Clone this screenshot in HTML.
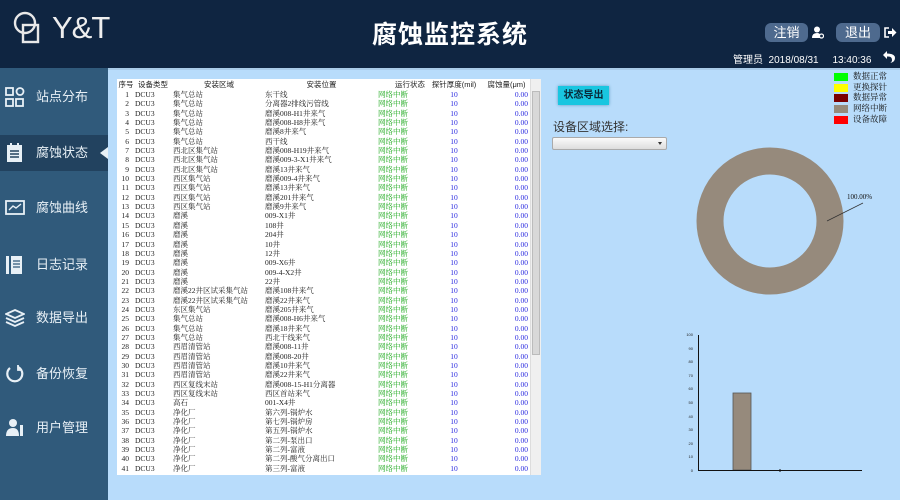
<!DOCTYPE html>
<html><head><meta charset="utf-8">
<style>
*{margin:0;padding:0;box-sizing:border-box}
body{width:900px;height:500px;overflow:hidden;background:#b8dcfb;font-family:"Liberation Sans","Noto Sans CJK SC",sans-serif;position:relative}
#hdr{position:absolute;left:0;top:0;width:900px;height:68px;background:#0f2541;color:#fff}
#side{position:absolute;left:0;top:68px;width:108px;height:432px;background:#305a7b}
.it{position:absolute;left:0;width:108px;height:36px;color:#e8f0f6;font-size:13px;line-height:36px}
.it span{position:absolute;left:36px}
.it svg{position:absolute;left:5px;top:8px}
.act{background:#22425f}
#tbl{position:absolute;left:117px;top:79px;width:424px;height:396px;background:#fff;overflow:hidden}
table{border-collapse:collapse;font-family:"Liberation Serif","Noto Serif CJK SC",serif;font-size:7.5px;position:absolute;left:0;top:0;width:413px}
td,th{height:9.35px;line-height:9.35px;padding:0;white-space:nowrap;font-weight:normal;overflow:hidden}
th{height:11px;line-height:11px;font-family:"Liberation Sans","Noto Sans CJK SC",sans-serif;font-size:7.5px;color:#222}
td{color:#222}
.g{color:#1aa81a}.b{color:#2a2ae0;text-align:center}.r{color:#2a2ae0;text-align:right;padding-right:2px}
.n{text-align:right;padding-right:6px}
</style></head><body>
<div id="hdr">
<svg style="position:absolute;left:13px;top:11px" width="36" height="36" viewBox="0 0 36 36" fill="none" stroke="#e8e8e8" stroke-width="2.4"><circle cx="12" cy="12" r="10"/><rect x="10" y="14" width="15" height="17"/></svg>
<div style="position:absolute;left:52px;top:10px;font-size:31px;color:#eee;letter-spacing:-1px">Y&amp;T</div>
<div style="position:absolute;left:0;width:900px;top:15px;text-align:center;font-size:25px;font-weight:bold;letter-spacing:1px">腐蚀监控系统</div>
<div style="position:absolute;left:765px;top:23px;width:43px;height:19px;border-radius:6px;background:#4e6a8e;font-size:13px;line-height:19px;text-align:center">注销</div>
<svg style="position:absolute;left:812px;top:26px" width="12" height="13"><circle cx="5" cy="3.5" r="3" fill="#fff"/><path d="M0 12 Q0 7 5 7 Q8 7 8 9 L8 12Z" fill="#fff"/><circle cx="9.5" cy="10" r="2" fill="none" stroke="#fff" stroke-width="1.2"/></svg>
<div style="position:absolute;left:836px;top:23px;width:44px;height:19px;border-radius:6px;background:#4e6a8e;font-size:13px;line-height:19px;text-align:center">退出</div>
<svg style="position:absolute;left:884px;top:27px" width="13" height="11"><path d="M5 1H1V10H5" stroke="#fff" stroke-width="1.6" fill="none"/><path d="M4 4H8V1L12.5 5.5L8 10V7H4Z" fill="#fff"/></svg>
<div style="position:absolute;left:733px;top:51px;font-size:10px">管理员&nbsp; 2018/08/31 &nbsp;&nbsp;&nbsp; 13:40:36</div>
<svg style="position:absolute;left:882px;top:50px" width="14" height="14"><path d="M5 1L1 5L5 9V6.5Q10 6 10 10Q10 12 8 13Q13 12 13 8Q13 3.5 5 3.5Z" fill="#fff"/></svg>
</div>
<div style="position:absolute;left:0;top:68px;width:900px;height:2px;background:#a9cbe8"></div>
<div id="side">
<div class="it" style="top:11px"><svg width="20" height="20" fill="none" stroke="#e8f0f6" stroke-width="1.8"><rect x="1" y="1" width="7" height="7"/><circle cx="15" cy="4.5" r="3.5"/><rect x="1" y="12" width="7" height="7"/><rect x="11" y="12" width="7" height="7"/></svg><span>站点分布</span></div>
<div class="it act" style="top:67px"><svg width="20" height="20"><rect x="2" y="2" width="15" height="17" fill="#e8f0f6"/><rect x="5" y="0" width="2" height="4" fill="#e8f0f6"/><rect x="12" y="0" width="2" height="4" fill="#e8f0f6"/><path d="M5 8H14M5 11H14M5 14H14" stroke="#22425f" stroke-width="1.4"/></svg><span>腐蚀状态</span><div style="position:absolute;right:0;top:12px;width:0;height:0;border-top:6px solid transparent;border-bottom:6px solid transparent;border-right:8px solid #e8f0f6"></div></div>
<div class="it" style="top:122px"><svg width="20" height="20"><rect x="1" y="3" width="18" height="13" fill="none" stroke="#e8f0f6" stroke-width="1.8"/><path d="M4 12L8 8L11 10L16 6" stroke="#e8f0f6" stroke-width="1.4" fill="none"/></svg><span>腐蚀曲线</span></div>
<div class="it" style="top:179px"><svg width="20" height="20"><rect x="1" y="1" width="3" height="18" fill="#e8f0f6"/><rect x="6" y="1" width="11" height="18" fill="#e8f0f6"/><path d="M8 6H15M8 9H15M8 12H15" stroke="#305a7b" stroke-width="1.2"/></svg><span>日志记录</span></div>
<div class="it" style="top:232px"><svg width="20" height="20" fill="none" stroke="#e8f0f6" stroke-width="1.8"><path d="M10 2L19 6L10 10L1 6Z"/><path d="M1 10L10 14L19 10"/><path d="M1 14L10 18L19 14"/></svg><span>数据导出</span></div>
<div class="it" style="top:288px"><svg width="20" height="20" fill="none" stroke="#e8f0f6" stroke-width="2.2"><path d="M13 3A7.5 7.5 0 1 1 5 4"/><path d="M13 1V6H17" stroke-width="1.8"/></svg><span>备份恢复</span></div>
<div class="it" style="top:342px"><svg width="20" height="20"><circle cx="8" cy="5" r="4" fill="#e8f0f6"/><path d="M1 18Q1 10 8 10Q14 10 14 18Z" fill="#e8f0f6"/><rect x="15" y="7" width="3" height="11" fill="#e8f0f6"/></svg><span>用户管理</span></div>
</div>
<div id="tbl">
<table>
<colgroup><col style="width:18px"><col style="width:38px"><col style="width:92px"><col style="width:113px"><col style="width:47px"><col style="width:58px"><col style="width:47px"></colgroup>
<tr><th>序号</th><th style="text-align:left;padding-left:3px">设备类型</th><th>安装区域</th><th>安装位置</th><th style="text-align:right">运行状态</th><th>探针厚度(mil)</th><th>腐蚀量(μm)</th></tr>
<tr><td class="n">1</td><td>DCU3</td><td>集气总站</td><td>东干线</td><td class="g">网络中断</td><td class="b">10</td><td class="r">0.00</td></tr>
<tr><td class="n">2</td><td>DCU3</td><td>集气总站</td><td>分离器2排线污管线</td><td class="g">网络中断</td><td class="b">10</td><td class="r">0.00</td></tr>
<tr><td class="n">3</td><td>DCU3</td><td>集气总站</td><td>磨溪008-H1井来气</td><td class="g">网络中断</td><td class="b">10</td><td class="r">0.00</td></tr>
<tr><td class="n">4</td><td>DCU3</td><td>集气总站</td><td>磨溪008-H8井来气</td><td class="g">网络中断</td><td class="b">10</td><td class="r">0.00</td></tr>
<tr><td class="n">5</td><td>DCU3</td><td>集气总站</td><td>磨溪8井来气</td><td class="g">网络中断</td><td class="b">10</td><td class="r">0.00</td></tr>
<tr><td class="n">6</td><td>DCU3</td><td>集气总站</td><td>西干线</td><td class="g">网络中断</td><td class="b">10</td><td class="r">0.00</td></tr>
<tr><td class="n">7</td><td>DCU3</td><td>西北区集气站</td><td>磨溪008-H19井来气</td><td class="g">网络中断</td><td class="b">10</td><td class="r">0.00</td></tr>
<tr><td class="n">8</td><td>DCU3</td><td>西北区集气站</td><td>磨溪009-3-X1井来气</td><td class="g">网络中断</td><td class="b">10</td><td class="r">0.00</td></tr>
<tr><td class="n">9</td><td>DCU3</td><td>西北区集气站</td><td>磨溪13井来气</td><td class="g">网络中断</td><td class="b">10</td><td class="r">0.00</td></tr>
<tr><td class="n">10</td><td>DCU3</td><td>西区集气站</td><td>磨溪009-4井来气</td><td class="g">网络中断</td><td class="b">10</td><td class="r">0.00</td></tr>
<tr><td class="n">11</td><td>DCU3</td><td>西区集气站</td><td>磨溪13井来气</td><td class="g">网络中断</td><td class="b">10</td><td class="r">0.00</td></tr>
<tr><td class="n">12</td><td>DCU3</td><td>西区集气站</td><td>磨溪201井来气</td><td class="g">网络中断</td><td class="b">10</td><td class="r">0.00</td></tr>
<tr><td class="n">13</td><td>DCU3</td><td>西区集气站</td><td>磨溪9井来气</td><td class="g">网络中断</td><td class="b">10</td><td class="r">0.00</td></tr>
<tr><td class="n">14</td><td>DCU3</td><td>磨溪</td><td>009-X1井</td><td class="g">网络中断</td><td class="b">10</td><td class="r">0.00</td></tr>
<tr><td class="n">15</td><td>DCU3</td><td>磨溪</td><td>108井</td><td class="g">网络中断</td><td class="b">10</td><td class="r">0.00</td></tr>
<tr><td class="n">16</td><td>DCU3</td><td>磨溪</td><td>204井</td><td class="g">网络中断</td><td class="b">10</td><td class="r">0.00</td></tr>
<tr><td class="n">17</td><td>DCU3</td><td>磨溪</td><td>10井</td><td class="g">网络中断</td><td class="b">10</td><td class="r">0.00</td></tr>
<tr><td class="n">18</td><td>DCU3</td><td>磨溪</td><td>12井</td><td class="g">网络中断</td><td class="b">10</td><td class="r">0.00</td></tr>
<tr><td class="n">19</td><td>DCU3</td><td>磨溪</td><td>009-X6井</td><td class="g">网络中断</td><td class="b">10</td><td class="r">0.00</td></tr>
<tr><td class="n">20</td><td>DCU3</td><td>磨溪</td><td>009-4-X2井</td><td class="g">网络中断</td><td class="b">10</td><td class="r">0.00</td></tr>
<tr><td class="n">21</td><td>DCU3</td><td>磨溪</td><td>22井</td><td class="g">网络中断</td><td class="b">10</td><td class="r">0.00</td></tr>
<tr><td class="n">22</td><td>DCU3</td><td>磨溪22井区试采集气站</td><td>磨溪108井来气</td><td class="g">网络中断</td><td class="b">10</td><td class="r">0.00</td></tr>
<tr><td class="n">23</td><td>DCU3</td><td>磨溪22井区试采集气站</td><td>磨溪22井来气</td><td class="g">网络中断</td><td class="b">10</td><td class="r">0.00</td></tr>
<tr><td class="n">24</td><td>DCU3</td><td>东区集气站</td><td>磨溪205井来气</td><td class="g">网络中断</td><td class="b">10</td><td class="r">0.00</td></tr>
<tr><td class="n">25</td><td>DCU3</td><td>集气总站</td><td>磨溪008-H6井来气</td><td class="g">网络中断</td><td class="b">10</td><td class="r">0.00</td></tr>
<tr><td class="n">26</td><td>DCU3</td><td>集气总站</td><td>磨溪18井来气</td><td class="g">网络中断</td><td class="b">10</td><td class="r">0.00</td></tr>
<tr><td class="n">27</td><td>DCU3</td><td>集气总站</td><td>西北干线来气</td><td class="g">网络中断</td><td class="b">10</td><td class="r">0.00</td></tr>
<tr><td class="n">28</td><td>DCU3</td><td>西眉清管站</td><td>磨溪008-11井</td><td class="g">网络中断</td><td class="b">10</td><td class="r">0.00</td></tr>
<tr><td class="n">29</td><td>DCU3</td><td>西眉清管站</td><td>磨溪008-20井</td><td class="g">网络中断</td><td class="b">10</td><td class="r">0.00</td></tr>
<tr><td class="n">30</td><td>DCU3</td><td>西眉清管站</td><td>磨溪10井来气</td><td class="g">网络中断</td><td class="b">10</td><td class="r">0.00</td></tr>
<tr><td class="n">31</td><td>DCU3</td><td>西眉清管站</td><td>磨溪22井来气</td><td class="g">网络中断</td><td class="b">10</td><td class="r">0.00</td></tr>
<tr><td class="n">32</td><td>DCU3</td><td>西区复线末站</td><td>磨溪008-15-H1分离器</td><td class="g">网络中断</td><td class="b">10</td><td class="r">0.00</td></tr>
<tr><td class="n">33</td><td>DCU3</td><td>西区复线末站</td><td>西区首站来气</td><td class="g">网络中断</td><td class="b">10</td><td class="r">0.00</td></tr>
<tr><td class="n">34</td><td>DCU3</td><td>高石</td><td>001-X4井</td><td class="g">网络中断</td><td class="b">10</td><td class="r">0.00</td></tr>
<tr><td class="n">35</td><td>DCU3</td><td>净化厂</td><td>第六列-锅炉水</td><td class="g">网络中断</td><td class="b">10</td><td class="r">0.00</td></tr>
<tr><td class="n">36</td><td>DCU3</td><td>净化厂</td><td>第七列-锅炉房</td><td class="g">网络中断</td><td class="b">10</td><td class="r">0.00</td></tr>
<tr><td class="n">37</td><td>DCU3</td><td>净化厂</td><td>第五列-锅炉水</td><td class="g">网络中断</td><td class="b">10</td><td class="r">0.00</td></tr>
<tr><td class="n">38</td><td>DCU3</td><td>净化厂</td><td>第二列-泵出口</td><td class="g">网络中断</td><td class="b">10</td><td class="r">0.00</td></tr>
<tr><td class="n">39</td><td>DCU3</td><td>净化厂</td><td>第二列-富液</td><td class="g">网络中断</td><td class="b">10</td><td class="r">0.00</td></tr>
<tr><td class="n">40</td><td>DCU3</td><td>净化厂</td><td>第二列-酸气分离出口</td><td class="g">网络中断</td><td class="b">10</td><td class="r">0.00</td></tr>
<tr><td class="n">41</td><td>DCU3</td><td>净化厂</td><td>第三列-富液</td><td class="g">网络中断</td><td class="b">10</td><td class="r">0.00</td></tr>
</table>
<div style="position:absolute;left:413px;top:0;width:11px;height:396px;background:#f0f0f0;border-left:1px solid #ddd"></div>
<div style="position:absolute;left:415px;top:12px;width:8px;height:264px;background:#d8d8d8;border:1px solid #bbb"></div>
</div>
<div style="position:absolute;left:558px;top:86px;width:51px;height:19px;background:#19c6e0;box-shadow:0 0 3px #5a9abf;font-size:10px;font-weight:bold;line-height:19px;text-align:center;color:#0a2a3a">状态导出</div>
<div style="position:absolute;left:553px;top:118px;font-size:12px;color:#333">设备区域选择:</div>
<div style="position:absolute;left:552px;top:137px;width:115px;height:13px;background:linear-gradient(#fafafa,#ddd);border:1px solid #aaa;border-radius:2px"><div style="position:absolute;right:4px;top:4px;border-left:2.5px solid transparent;border-right:2.5px solid transparent;border-top:3px solid #333"></div></div>
<div style="position:absolute;left:834px;top:71px;font-size:8.5px;font-family:'Liberation Serif','Noto Serif CJK SC',serif;line-height:10.7px;color:#111">
<div><i style="display:inline-block;width:14px;height:8px;background:#00ff00;vertical-align:middle;margin-right:5px"></i>数据正常</div>
<div><i style="display:inline-block;width:14px;height:8px;background:#ffff00;vertical-align:middle;margin-right:5px"></i>更换探针</div>
<div><i style="display:inline-block;width:14px;height:8px;background:#7a0000;vertical-align:middle;margin-right:5px"></i>数据异常</div>
<div><i style="display:inline-block;width:14px;height:8px;background:#968a7a;vertical-align:middle;margin-right:5px"></i>网络中断</div>
<div><i style="display:inline-block;width:14px;height:8px;background:#ff0000;vertical-align:middle;margin-right:5px"></i>设备故障</div>
</div>
<svg style="position:absolute;left:660px;top:140px" width="240" height="360">
<circle cx="110" cy="81" r="60" fill="none" stroke="#968a7c" stroke-width="27"/>
<line x1="167" y1="81" x2="203" y2="63" stroke="#333" stroke-width="0.7"/>
<text x="187" y="59" font-size="7" font-family="Liberation Serif" fill="#111">100.00%</text>
<g font-size="4" font-family="Liberation Sans" fill="#222" text-anchor="end">
<text x="33" y="196">100</text><text x="33" y="210">90</text><text x="33" y="223">80</text><text x="33" y="237">70</text><text x="33" y="250">60</text><text x="33" y="264">50</text><text x="33" y="278">40</text><text x="33" y="291">30</text><text x="33" y="305">20</text><text x="33" y="318">10</text><text x="33" y="332">0</text>
</g>
<rect x="73" y="253" width="18" height="77" fill="#968a7c" stroke="#555" stroke-width="0.8"/>
<line x1="38.5" y1="195" x2="38.5" y2="331" stroke="#111" stroke-width="1"/>
<line x1="38" y1="330.5" x2="202" y2="330.5" stroke="#111" stroke-width="1"/>
<line x1="120" y1="329" x2="120" y2="332" stroke="#111"/>
</svg>
</body></html>
